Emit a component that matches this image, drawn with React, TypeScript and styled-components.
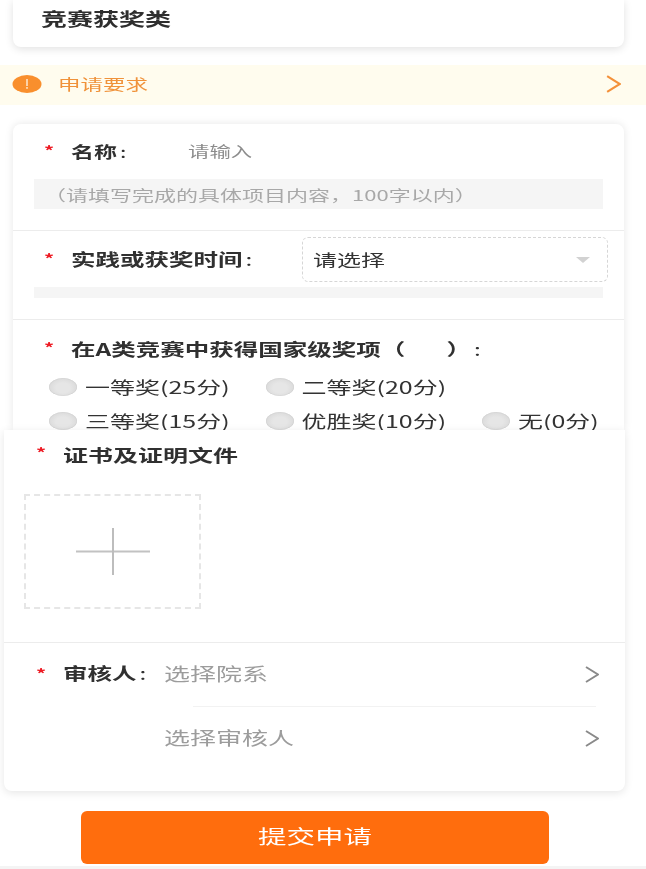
import React from 'react';
import styled, { createGlobalStyle, css } from 'styled-components';

const GlobalStyle = createGlobalStyle`
  html, body {
    margin: 0;
    padding: 0;
    background: #fff;
    overflow: hidden;
  }
  body {
    font-family: "Noto Sans CJK SC", "Noto Sans", sans-serif;
    color: #333;
  }
`;

const squashed = css`
  display: inline-block;
  line-height: 1;
  transform: translateY(-1px) scaleY(0.68);
  white-space: pre;
  filter: blur(0.3px);
`;

const Page = styled.div`
  width: 646px;
  height: 869px;
  overflow: hidden;
`;

const TypeCard = styled.div`
  width: 611px;
  height: 47px;
  margin-left: 13px;
  padding-left: 28px;
  box-sizing: border-box;
  display: flex;
  align-items: center;
  padding-bottom: 8px;
  background: #fff;
  border-radius: 0 0 8px 8px;
  box-shadow: 0 2px 8px rgba(0, 0, 0, 0.12);
`;

const TypeTitle = styled.span`
  ${squashed}
  font-size: 26px;
  font-weight: 700;
  color: #2e2e2e;
`;

const Banner = styled.div`
  height: 40px;
  margin-top: 18px;
  padding: 0 25px 2px 12px;
  box-sizing: border-box;
  display: flex;
  align-items: center;
  background: #fffcee;
`;

const BannerText = styled.span`
  ${squashed}
  flex: 1;
  margin-left: 16px;
  font-size: 22.5px;
  color: #f0923a;
`;

const FormCard = styled.div`
  width: 611px;
  height: 306px;
  margin: 19px 0 0 13px;
  background: #fff;
  border-radius: 8px 8px 0 0;
  box-shadow: 0 0 8px rgba(0, 0, 0, 0.1);
`;

const Section = styled.div<{ $pad?: string }>`
  padding: ${(p) => p.$pad || '0'};
  border-bottom: 1px solid #ececec;
`;

const Star = styled.span`
  ${squashed}
  width: 27px;
  flex: none;
  font-size: 20px;
  font-weight: 700;
  color: #ee1c25;
`;

const Label = styled.span<{ $size?: number; $w?: number }>`
  ${squashed}
  flex: none;
  width: ${(p) => (p.$w ? `${p.$w}px` : 'auto')};
  font-size: ${(p) => p.$size || 24.5}px;
  font-weight: 700;
  color: #303030;
`;

const FieldRow = styled.div<{ $h: number; $inset?: number; $top?: number }>`
  height: ${(p) => p.$h}px;
  margin-top: ${(p) => p.$top || 0}px;
  padding-left: ${(p) => p.$inset ?? 31}px;
  display: flex;
  align-items: center;

  ${Label} {
    transform: scaleY(0.68);
  }
`;

const Colon = styled.span`
  margin-left: 3px;
  font-weight: 400;
`;

const InputHint = styled.span`
  ${squashed}
  font-size: 21.4px;
  color: #8c8c8c;
`;

const Hint = styled.div<{ $h: number; $top?: number }>`
  height: ${(p) => p.$h}px;
  margin: ${(p) => p.$top || 0}px 21px 0;
  display: flex;
  align-items: center;
  background: #f5f5f5;
`;

const HintText = styled.span`
  ${squashed}
  margin-left: 10px;
  padding-top: 4px;
  font-size: 22px;
  color: #a8a8a8;
`;

const Select = styled.div`
  width: 306px;
  height: 45px;
  box-sizing: border-box;
  margin-left: auto;
  margin-right: 16px;
  padding: 0 17px 0 10px;
  display: flex;
  align-items: center;
  justify-content: space-between;
  border: 1px dashed #d6d6d6;
  border-radius: 6px;
`;

const SelectText = styled.span`
  ${squashed}
  font-size: 24px;
  color: #333;
`;

const Caret = styled.span`
  width: 0;
  height: 0;
  border-left: 7px solid transparent;
  border-right: 7px solid transparent;
  border-top: 6px solid #d2d2d2;
`;

const RadioGrid = styled.div`
  margin-left: 36px;
  display: grid;
  grid-template-columns: repeat(3, 216.5px);
  grid-auto-rows: 34px;
`;

const Radio = styled.div<{ $col?: number }>`
  grid-column: ${(p) => p.$col || 'auto'};
  display: flex;
  align-items: center;
  gap: 8px;
`;

const RadioDot = styled.span`
  width: 28px;
  height: 18px;
  flex: none;
  border-radius: 50%;
  background: radial-gradient(ellipse at 50% 55%, #e6e6e6 35%, #d2d2d2 100%);
  box-shadow: inset 0 0 1px rgba(0, 0, 0, 0.2);
`;

const RadioLabel = styled.span`
  ${squashed}
  font-size: 25px;
  color: #333;
`;

const UploadCard = styled.div`
  position: relative;
  width: 621px;
  margin-left: 4px;
  background: #fff;
  border-radius: 0 0 8px 8px;
  box-shadow: 0 2px 8px rgba(0, 0, 0, 0.1);
`;

const UploadBox = styled.div`
  width: 177px;
  height: 115px;
  box-sizing: border-box;
  margin: 16px 0 33px 20px;
  display: flex;
  align-items: center;
  justify-content: center;
  border: 2px dashed #e6e6e6;
`;

const PickList = styled.div`
  padding-bottom: 21px;
`;

const PickRow = styled.div`
  height: 63px;
  padding: 0 26px 0 32px;
  display: flex;
  align-items: center;
`;

const PickLine = styled.div`
  height: 1px;
  margin: 0 29px 0 189px;
  background: #f2f2f2;
`;

const PickText = styled.span<{ $offset?: number }>`
  ${squashed}
  flex: 1;
  margin-left: ${(p) => p.$offset || 0}px;
  font-size: 26px;
  color: #9c9c9c;
`;

const SubmitButton = styled.button`
  display: flex;
  align-items: center;
  justify-content: center;
  width: 468px;
  height: 53px;
  margin: 20px 0 0 81px;
  padding: 0;
  border: 0;
  border-radius: 6px;
  background: #ff6d0d;
  font-family: inherit;
`;

const SubmitText = styled.span`
  ${squashed}
  font-size: 28.5px;
  color: #fff;
`;

const BottomEdge = styled.div`
  height: 3px;
  margin-top: 2px;
  background: #f4f4f4;
`;

const Chevron = ({ color, w = 14, h = 17 }: { color: string; w?: number; h?: number }) => (
  <svg width={w} height={h} viewBox="0 0 14 17" fill="none" style={{ flex: 'none' }}>
    <path d="M1 1L13 8.5L1 16" stroke={color} strokeWidth="2" />
  </svg>
);

const AlertIcon = () => (
  <svg width="30" height="18" viewBox="0 0 30 18" style={{ flex: 'none' }}>
    <ellipse cx="15" cy="9" rx="14.5" ry="9" fill="#f98f2d" />
    <rect x="14.2" y="4" width="1.6" height="7" fill="#fde3c8" />
    <rect x="14.2" y="12" width="1.6" height="1.8" fill="#fde3c8" />
  </svg>
);

const PlusIcon = () => (
  <svg width="74" height="47" viewBox="0 0 74 47">
    <rect x="0" y="22.5" width="74" height="2" fill="#c2c2c2" />
    <rect x="36" y="0" width="2" height="47" fill="#bdbdbd" />
  </svg>
);

const options = [
  { label: '一等奖(25分)' },
  { label: '二等奖(20分)' },
  { label: '三等奖(15分)', col: 1 },
  { label: '优胜奖(10分)' },
  { label: '无(0分)' },
];

const App = () => {
  return (
    <Page>
      <GlobalStyle />
      <TypeCard>
        <TypeTitle>竞赛获奖类</TypeTitle>
      </TypeCard>

      <Banner>
        <AlertIcon />
        <BannerText>申请要求</BannerText>
        <Chevron color="#f4913a" w={15} h={18} />
      </Banner>

      <FormCard>
        <Section $pad="0 0 21px">
          <FieldRow $h={55}>
            <Star>*</Star>
            <Label $size={23} $w={117}>名称<Colon>:</Colon></Label>
            <InputHint>请输入</InputHint>
          </FieldRow>
          <Hint $h={30}>
            <HintText>（请填写完成的具体项目内容，100字以内）</HintText>
          </Hint>
        </Section>
        <Section $pad="6px 0 21px">
          <FieldRow $h={45}>
            <Star>*</Star>
            <Label>实践或获奖时间<Colon>:</Colon></Label>
            <Select>
              <SelectText>请选择</SelectText>
              <Caret />
            </Select>
          </FieldRow>
          <Hint $h={11} $top={5} />
        </Section>
        <FieldRow $h={42} $top={8}>
          <Star>*</Star>
          <Label>在A类竞赛中获得国家级奖项（{'\u3000   '}）<Colon>:</Colon></Label>
        </FieldRow>
        <RadioGrid>
          {options.map((o) => (
            <Radio key={o.label} $col={o.col}>
              <RadioDot />
              <RadioLabel>{o.label}</RadioLabel>
            </Radio>
          ))}
        </RadioGrid>
      </FormCard>

      <UploadCard>
        <FieldRow $h={48} $inset={32}>
          <Star>*</Star>
          <Label $size={25}>证书及证明文件</Label>
        </FieldRow>
        <Section>
          <UploadBox>
            <PlusIcon />
          </UploadBox>
        </Section>
        <PickList>
          <PickRow>
            <Star>*</Star>
            <Label $w={101}>审核人<Colon>:</Colon></Label>
            <PickText>选择院系</PickText>
            <Chevron color="#8a8a8a" />
          </PickRow>
          <PickLine />
          <PickRow>
            <PickText $offset={128}>选择审核人</PickText>
            <Chevron color="#8a8a8a" />
          </PickRow>
        </PickList>
      </UploadCard>

      <SubmitButton type="button">
        <SubmitText>提交申请</SubmitText>
      </SubmitButton>
      <BottomEdge />
    </Page>
  );
};

export default App;
